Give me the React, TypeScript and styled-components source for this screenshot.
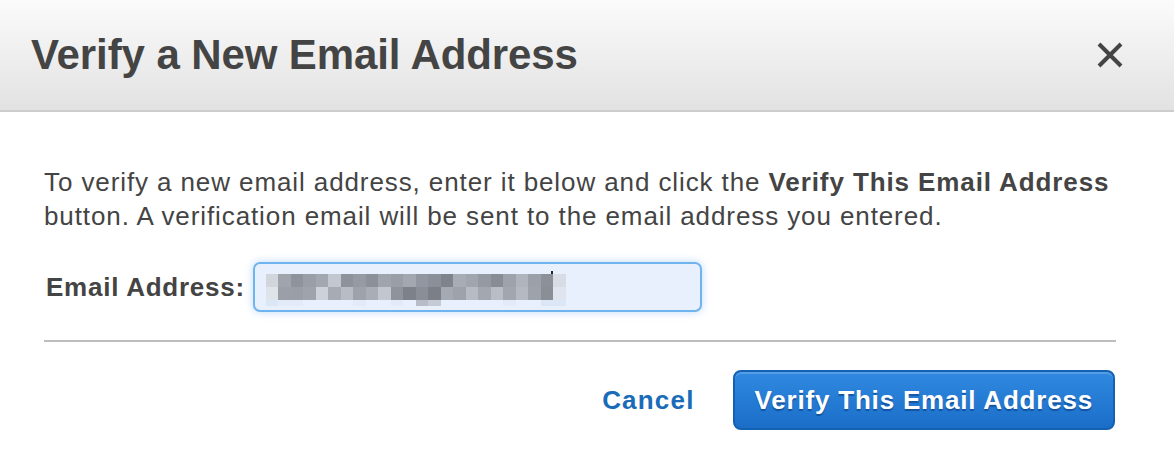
import React from "react";
import styled, { createGlobalStyle } from "styled-components";

const Global = createGlobalStyle`
  html, body { margin: 0; padding: 0; background: #ffffff; }
  body { font-family: "Liberation Sans", Arial, Helvetica, sans-serif; color: #444444; }
  * { box-sizing: border-box; }
`;

const Dialog = styled.div`
  width: 1174px;
  height: 456px;
  display: flex;
  flex-direction: column;
  background: #ffffff;
  overflow: hidden;
`;

const Header = styled.div`
  height: 112px;
  flex: none;
  display: flex;
  align-items: center;
  justify-content: space-between;
  padding: 0 50px 0 31px;
  background: linear-gradient(#fbfbfb, #e2e2e2);
  border-bottom: 2px solid #cdcdcd;
`;

const Title = styled.h1`
  margin: 0;
  font-size: 42px;
  font-weight: 700;
  color: #444444;
  letter-spacing: -0.1px;
`;

const CloseButton = styled.button`
  border: 0;
  background: transparent;
  padding: 0;
  width: 28px;
  height: 28px;
  display: flex;
  align-items: center;
  justify-content: center;
  cursor: pointer;
`;

const Body = styled.div`
  padding: 53px 58px 0 44px;
  display: flex;
  flex-direction: column;
`;

const Intro = styled.p`
  margin: 0;
  font-size: 26px;
  line-height: 34px;
  letter-spacing: 0.9px;
  color: #444444;
`;

const FieldRow = styled.div`
  margin-top: 29px;
  display: flex;
  align-items: center;
  gap: 8px;
`;

const Label = styled.label`
  font-size: 26px;
  font-weight: 700;
  letter-spacing: 0.75px;
  color: #444444;
  padding-left: 2px;
`;

const InputBox = styled.div`
  position: relative;
  width: 449px;
  height: 50px;
  border: 2px solid #6fb3ef;
  border-radius: 7px;
  background: #e8f0fe;
  box-shadow: 0 0 8px rgba(110, 170, 240, 0.45);
  display: flex;
  align-items: center;
  padding: 6px 0 0 11px;
`;

const Mosaic = styled.div`
  display: grid;
  grid-template-columns: repeat(24, 12.5px);
  grid-template-rows: 13px 13px 6px;
`;

const Cell = styled.span`
  display: block;
`;

const Caret = styled.span`
  position: absolute;
  left: 296px;
  top: 7px;
  width: 2px;
  height: 3px;
  background: #222;
`;

const Divider = styled.hr`
  margin: 28px 0 0 0;
  border: 0;
  height: 2px;
  background: #bdbdbd;
`;

const Footer = styled.div`
  margin-top: 28px;
  display: flex;
  justify-content: flex-end;
  align-items: center;
  gap: 38px;
  padding-right: 1px;
`;

const CancelLink = styled.a`
  font-size: 26px;
  font-weight: 700;
  letter-spacing: 1.2px;
  color: #1a6bb8;
  text-decoration: none;
  cursor: pointer;
`;

const PrimaryButton = styled.button`
  height: 60px;
  padding: 0 20px;
  border: 2px solid #1361b3;
  border-radius: 8px;
  background: linear-gradient(#3089e0, #1b6ec8);
  box-shadow: inset 0 2px 0 rgba(255, 255, 255, 0.18);
  color: #ffffff;
  font-family: "Liberation Sans", Arial, Helvetica, sans-serif;
  font-size: 26px;
  font-weight: 700;
  letter-spacing: 0.8px;
  text-shadow: 0 2px 1px rgba(0, 40, 100, 0.45);
  cursor: pointer;
`;

const rows: string[][] = [
  ["#d2d6dc","#a0a4ad","#8f939c","#9a9ea7","#a3a7b0","#c3c7cf","#8e929b","#969aa3","#8c9099","#a0a4ad","#9a9ea7","#a3a7b0","#9296a0","#8b8f98","#7f838c","#a8acb5","#a1a5ae","#9599a2","#888c95","#9ea2ab","#b0b4bc","#9ca0a9","#8c9099","#d8dce4"],
  ["#dfe3ea","#9b9fa8","#9a9ea7","#9fa3ac","#cdd1d9","#a7abb4","#b8bcc4","#9ea2ab","#a9adb6","#c2c6ce","#8f939c","#7d818a","#8a8e97","#7b7f88","#a5a9b2","#9ea2ab","#b7bbc3","#a3a7b0","#b9bdc5","#a2a6af","#b5b9c1","#9ea2ab","#8a8e97","#dfe4ee"],
  ["#dbe6f6","#e3ebf9","#e3ebf9","#e8f0fe","#e8f0fe","#e8f0fe","#e8f0fe","#e3ebf9","#e8f0fe","#e8f0fe","#e3ebf9","#e8f0fe","#b8bcc8","#c6cad4","#e8f0fe","#e8f0fe","#e8f0fe","#e8f0fe","#e8f0fe","#e3ebf9","#e8f0fe","#e8f0fe","#dbe6f6","#dbe6f6"],
];

export default function App() {
  return (
    <>
      <Global />
      <Dialog>
        <Header>
          <Title>Verify a New Email Address</Title>
          <CloseButton aria-label="Close">
            <svg width="28" height="28" viewBox="0 0 28 28">
              <path d="M3 3 L25 25 M25 3 L3 25" stroke="#444" strokeWidth="4" strokeLinecap="butt" />
            </svg>
          </CloseButton>
        </Header>
        <Body>
          <Intro>
            To verify a new email address, enter it below and click the <b>Verify This Email Address</b> button. A verification email will be sent to the email address you entered.
          </Intro>
          <FieldRow>
            <Label>Email Address:</Label>
            <InputBox>
              <Mosaic>
                {rows.flatMap((r, ri) =>
                  r.map((c, ci) => <Cell key={`${ri}-${ci}`} style={{ background: c }} />)
                )}
              </Mosaic>
              <Caret />
            </InputBox>
          </FieldRow>
          <Divider />
          <Footer>
            <CancelLink>Cancel</CancelLink>
            <PrimaryButton>Verify This Email Address</PrimaryButton>
          </Footer>
        </Body>
      </Dialog>
    </>
  );
}
